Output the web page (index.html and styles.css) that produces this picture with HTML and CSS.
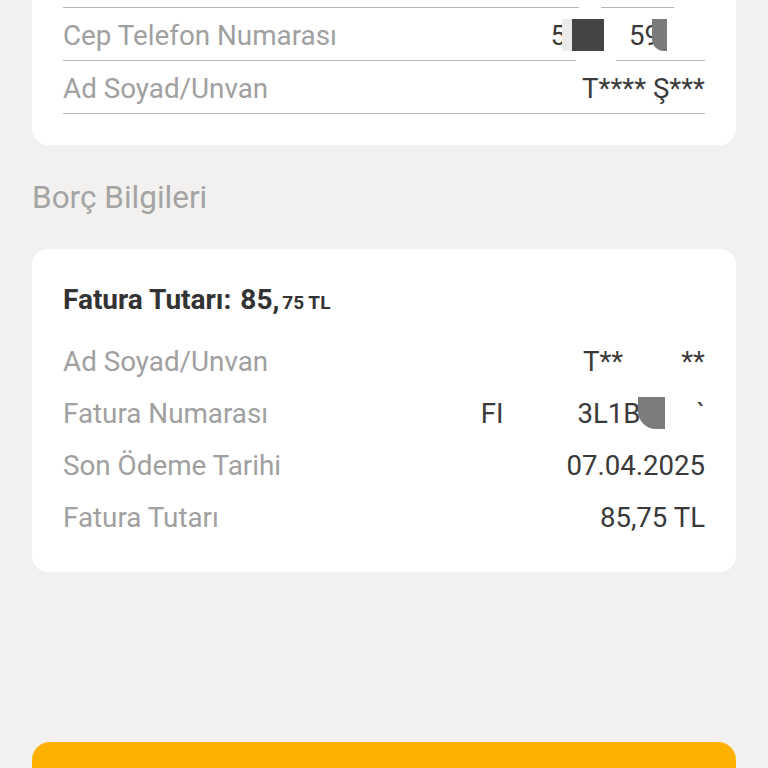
FILE: index.html
```html
<!DOCTYPE html>
<html lang="tr">
<head>
<meta charset="utf-8">
<link rel="stylesheet" href="styles.css">
</head>
<body>
<div class="page">
  <section class="card card-top">
    <div class="row row-lined"><span class="label">&nbsp;</span><span class="value"></span></div>
    <div class="row row-lined">
      <span class="label">Cep Telefon Numarası</span>
      <span class="value redact">
        <span>5</span><span class="blk blk-dark"></span><span class="gap gap-40"></span><span>59</span><span class="blk blk-mid"></span><span class="gap gap-38"></span>
      </span>
      <span class="cut cut-a"></span>
    </div>
    <div class="row row-lined">
      <span class="label">Ad Soyad/Unvan</span>
      <span class="value">T**** Ş***</span>
    </div>
    <span class="cut cut-top1"></span>
    <span class="cut cut-top2"></span>
  </section>

  <h2 class="section-title">Borç Bilgileri</h2>

  <section class="card card-bill">
    <div class="bill-title">Fatura Tutarı: <span class="amount">85,<small>75 TL</small></span></div>
    <div class="row">
      <span class="label">Ad Soyad/Unvan</span>
      <span class="value redact"><span>T**</span><span class="gap gap-86"></span><span>**</span></span>
    </div>
    <div class="row">
      <span class="label">Fatura Numarası</span>
      <span class="value redact"><span>FI</span><span class="gap gap-74"></span><span>3L1B</span><span class="blk blk-round"></span><span class="gap gap-33"></span><span>`</span></span>
    </div>
    <div class="row">
      <span class="label">Son Ödeme Tarihi</span>
      <span class="value">07.04.2025</span>
    </div>
    <div class="row">
      <span class="label">Fatura Tutarı</span>
      <span class="value">85,75 TL</span>
    </div>
  </section>

  <div class="spacer"></div>
  <button class="cta"></button>
</div>
</body>
</html>
```
FILE: styles.css
```css
html, body {
  margin: 0;
  padding: 0;
  background: #f2f1ef;
  font-family: Roboto, "Noto Sans", Arial, sans-serif;
}
body {
  width: 768px;
  height: 768px;
  overflow: hidden;
}
.page {
  margin-top: -45px;
  padding: 0 32px;
  display: flex;
  flex-direction: column;
}
.card {
  background: #ffffff;
  border-radius: 16px;
  position: relative;
}
.card-top {
  padding: 0 31px 31px 31px;
  border-radius: 0 0 16px 16px;
}
.row {
  height: 52px;
  display: flex;
  align-items: center;
  justify-content: space-between;
  position: relative;
}
.row-lined {
  border-bottom: 1px solid #b5b5b5;
  padding-top: 2px;
  height: 50px;
}
.label {
  font-size: 27.8px;
  color: #a0a0a0;
}
.value {
  font-size: 27.6px;
  color: #3a3a3a;
  display: flex;
  align-items: center;
}
.redact span { display: inline-block; }
.blk { display: inline-block; height: 32px; }
.blk-dark { width: 32px; background: #454545; margin-left: 6px; box-shadow: -10px 0 0 #ececec; }
.blk-mid { width: 15px; background: #7a7a7a; border-bottom-left-radius: 12px; margin-left: -8px; }
.blk-round { width: 27px; background: #7c7c7c; border-bottom-left-radius: 18px; margin-left: -2px; }
.gap { display: inline-block; }
.gap-40 { width: 25px; }
.gap-38 { width: 38px; }
.gap-86 { width: 58px; }
.gap-74 { width: 74px; }
.gap-33 { width: 31px; }
.cut {
  position: absolute;
  background: #ffffff;
  height: 4px;
}
.cut-a { right: 89px; bottom: -2px; width: 40px; }
.cut-top1 { top: 50px; left: 547px; width: 22px; }
.cut-top2 { top: 50px; left: 642px; width: 36px; }
.section-title {
  margin: 0;
  font-weight: 400;
  font-size: 31.5px;
  color: #a4a4a4;
  height: 104px;
  display: flex;
  align-items: center;
}
.card-bill {
  padding: 26px 31px 29px 31px;
}
.bill-title {
  font-size: 28px;
  font-weight: 700;
  color: #333333;
  height: 48px;
  display: flex;
  align-items: center;
  margin-bottom: 12px;
}
.amount {
  margin-left: 9px;
}
.amount small {
  font-size: 19px;
  margin-left: 3px;
  margin-top: 4px;
}
.spacer { height: 170px; }
.cta {
  display: block;
  width: 100%;
  height: 80px;
  border: 0;
  border-radius: 18px;
  background: #ffb000;
  padding: 0;
}
```
